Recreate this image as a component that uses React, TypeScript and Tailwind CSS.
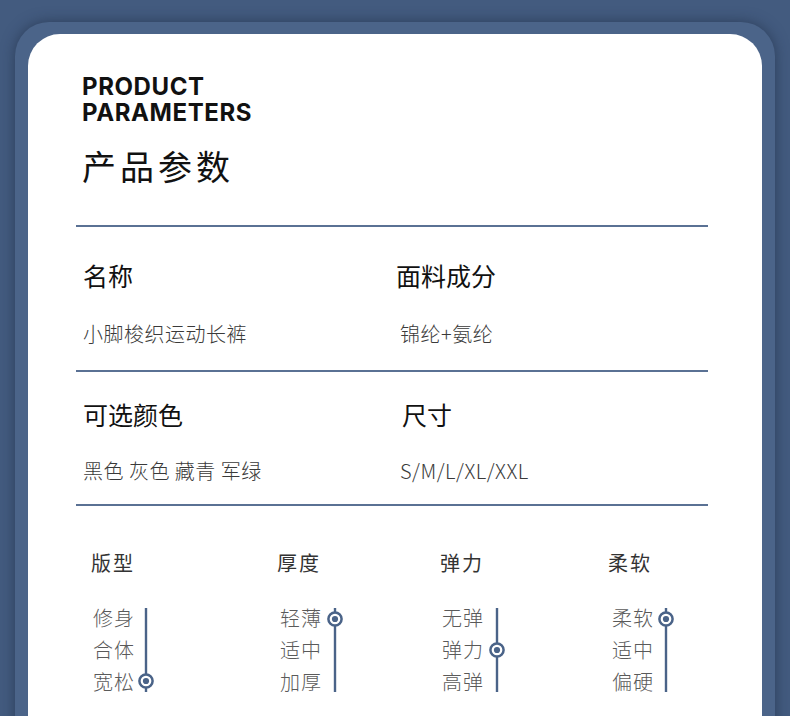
const CJK = "font-['Noto_Sans_CJK_SC',sans-serif]";

type Scale = {
  title: string;
  items: string[];
  active: number;
  colClass: string;
  textClass: string;
};

const SCALES: Scale[] = [
  { title: '版型', items: ['修身', '合体', '宽松'], active: 2, colClass: 'w-[186px] shrink-0', textClass: 'ml-[2px] w-[45px]' },
  { title: '厚度', items: ['轻薄', '适中', '加厚'], active: 0, colClass: 'w-[163px] shrink-0', textClass: 'ml-[3px] w-[47px]' },
  { title: '弹力', items: ['无弹', '弹力', '高弹'], active: 1, colClass: 'w-[168px] shrink-0', textClass: 'ml-[2px] w-[47px]' },
  { title: '柔软', items: ['柔软', '适中', '偏硬'], active: 0, colClass: 'flex-1', textClass: 'ml-[4px] w-[46px]' },
];

function Slider({ active }: { active: number }) {
  const cy = 17 + active * 31;
  return (
    <svg width="16" height="96" viewBox="0 0 16 96" className="shrink-0">
      <line x1="8" y1="6" x2="8" y2="90" stroke="#4a6388" strokeWidth="2.4" />
      <circle cx="8" cy={cy} r="6.6" fill="#fff" stroke="#4a6388" strokeWidth="2.5" />
      <circle cx="8" cy={cy} r="3.1" fill="#4a6388" />
    </svg>
  );
}

function Divider({ className }: { className: string }) {
  return <div className={`h-[2px] bg-[#5a7194] ${className}`} />;
}

export default function App() {
  return (
    <div className="h-[716px] overflow-hidden bg-[#435b7f] pt-[22px] px-[15px]">
      <div className="h-[720px] rounded-t-[34px] bg-[#4b6489] pt-[12px] px-[13px] shadow-[0_0_14px_rgba(25,38,60,0.55)]">
        <div className={`h-[700px] rounded-t-[32px] bg-white pt-[40px] pl-[48px] pr-[54px] ${CJK}`}>
          <div className="ml-[6px] font-['Inter',sans-serif] text-[24px] leading-[26px] tracking-[0.6px] font-bold text-[#111]">
            <div>PRODUCT</div>
            <div>PARAMETERS</div>
          </div>
          <div className="mt-[23px] ml-[6px] text-[34px] leading-[34px] tracking-[4px] text-[#111]">产品参数</div>

          <Divider className="mt-[42px]" />

          <div className="flex pl-[7px]">
            <div className="w-[313px] shrink-0">
              <div className="mt-[36px] text-[25px] leading-[25px] text-[#111]">名称</div>
              <div className="mt-[36px] text-[20px] leading-[20px] tracking-[0.5px] font-light text-[#3a3a3a]">小脚梭织运动长裤</div>
            </div>
            <div className="flex-1">
              <div className="mt-[36px] text-[25px] leading-[25px] text-[#111]">面料成分</div>
              <div className="mt-[36px] ml-[4px] text-[20px] leading-[20px] tracking-[0.5px] font-light text-[#3a3a3a]">锦纶+氨纶</div>
            </div>
          </div>

          <Divider className="mt-[26px]" />

          <div className="flex pl-[7px]">
            <div className="w-[313px] shrink-0">
              <div className="mt-[30px] text-[25px] leading-[25px] text-[#111]">可选颜色</div>
              <div className="mt-[34px] text-[20px] leading-[20px] tracking-[0.5px] font-light text-[#3a3a3a]">黑色 灰色 藏青 军绿</div>
            </div>
            <div className="flex-1">
              <div className="mt-[30px] ml-[6px] text-[25px] leading-[25px] text-[#111]">尺寸</div>
              <div className="mt-[34px] ml-[4px] text-[20px] leading-[20px] tracking-[0.5px] font-light text-[#3a3a3a]">S/M/L/XL/XXL</div>
            </div>
          </div>

          <Divider className="mt-[23px]" />

          <div className="flex pl-[15px]">
            {SCALES.map((s) => (
              <div key={s.title} className={s.colClass}>
                <div className="mt-[47px] text-[20px] leading-[20px] tracking-[2px] text-[#333]">{s.title}</div>
                <div className="mt-[29px] flex">
                  <div className={`text-[20px] leading-[32px] tracking-[1px] font-light text-[#5a5a5a] ${s.textClass}`}>
                    {s.items.map((it) => (
                      <div key={it}>{it}</div>
                    ))}
                  </div>
                  <Slider active={s.active} />
                </div>
              </div>
            ))}
          </div>
        </div>
      </div>
    </div>
  );
}
